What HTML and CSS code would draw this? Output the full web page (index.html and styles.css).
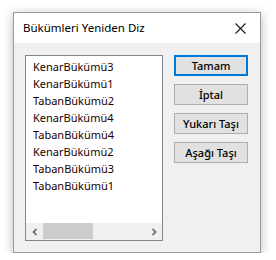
FILE: index.html
```html
<!DOCTYPE html>
<html>
<head>
  <meta http-equiv="Content-Type" content="text/html; charset=UTF-8">
  <title>Bükümleri Yeniden Diz</title>
  <link rel="stylesheet" href="styles.css">
</head>
<body>
  <div class="dialog">
    <div class="titlebar">
      <span class="title">Bükümleri Yeniden Diz</span>
      <svg class="close" width="11" height="11" viewBox="0 0 11 11">
        <path d="M0.5 0.5 L10.5 10.5 M10.5 0.5 L0.5 10.5" stroke="#1a1a1a" stroke-width="1.1" fill="none"/>
      </svg>
    </div>
    <div class="content">
      <div class="listbox">
        <ul class="items">
          <li>KenarBükümü3</li>
          <li>KenarBükümü1</li>
          <li>TabanBükümü2</li>
          <li>KenarBükümü4</li>
          <li>TabanBükümü4</li>
          <li>KenarBükümü2</li>
          <li>TabanBükümü3</li>
          <li>TabanBükümü1</li>
        </ul>
        <div class="hscroll">
          <span class="arrow">
            <svg width="8" height="8" viewBox="0 0 8 8"><path d="M5.5 1 L2.5 4 L5.5 7" stroke="#606060" stroke-width="1.6" fill="none"/></svg>
          </span>
          <div class="track"><div class="thumb"></div></div>
          <span class="arrow">
            <svg width="8" height="8" viewBox="0 0 8 8"><path d="M2.5 1 L5.5 4 L2.5 7" stroke="#606060" stroke-width="1.6" fill="none"/></svg>
          </span>
        </div>
      </div>
      <div class="buttons">
        <button type="button" class="btn default">Tamam</button>
        <button type="button" class="btn">İptal</button>
        <button type="button" class="btn">Yukarı Taşı</button>
        <button type="button" class="btn">Aşağı Taşı</button>
      </div>
    </div>
  </div>
</body>
</html>
```

FILE: styles.css
```css
html, body {
  margin: 0;
  background: #fff;
}
body {
  padding: 12px 0 0 13px;
  font-family: "Noto Sans", "Liberation Sans", sans-serif;
  font-size: 11px;
  color: #000;
}
.dialog {
  width: 246px;
  height: 239px;
  border: 1px solid #9a9a9a;
  background: #f0f0f0;
  box-shadow: 0 2px 10px rgba(0, 0, 0, 0.28);
  display: flex;
  flex-direction: column;
}
.titlebar {
  height: 30px;
  background: #fff;
  display: flex;
  align-items: center;
  padding: 0 9px 0 9px;
  font-size: 11.5px;
}
.title {
  flex: 1;
  position: relative;
  top: -1px;
}
.close {
  margin-right: 5px;
}
.content {
  display: flex;
  padding: 12px 12px 0 11px;
}
.listbox {
  width: 136px;
  height: 184px;
  border: 1px solid #828790;
  background: #fff;
  display: flex;
  flex-direction: column;
}
.items {
  flex: 1;
  list-style: none;
  margin: 0;
  padding: 2px 0 0 7px;
  color: #1a0000;
}
.items li {
  height: 17px;
  line-height: 17px;
  white-space: nowrap;
}
.hscroll {
  height: 17px;
  display: flex;
  background: #f0f0f0;
}
.arrow {
  width: 17px;
  display: flex;
  align-items: center;
  justify-content: center;
}
.track {
  flex: 1;
  padding-bottom: 1px;
}
.thumb {
  width: 50px;
  height: 16px;
  background: #cdcdcd;
}
.buttons {
  display: flex;
  flex-direction: column;
  gap: 8px;
  margin-left: 11px;
}
.btn {
  width: 74px;
  height: 21px;
  padding: 0;
  border: 1px solid #adadad;
  background: #e1e1e1;
  font-family: inherit;
  font-size: 11px;
  font-weight: 500;
  color: #000;
}
.btn.default {
  border: 2px solid #0078d7;
}
```
